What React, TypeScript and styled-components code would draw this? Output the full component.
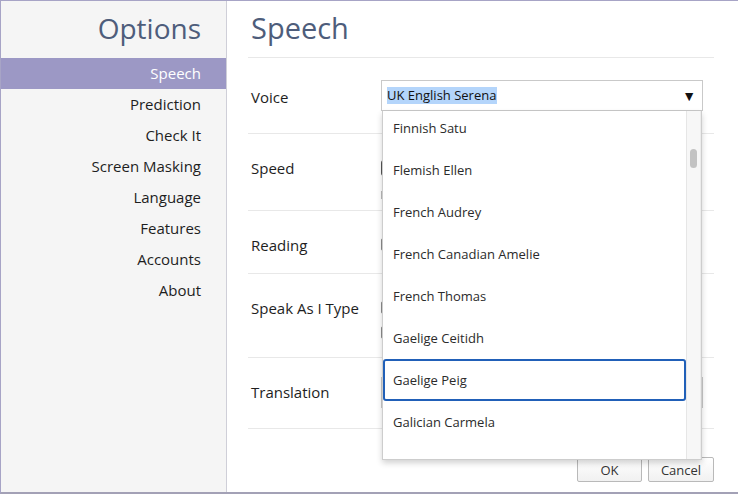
import React from 'react'
import styled, { createGlobalStyle } from 'styled-components'

const GlobalStyle = createGlobalStyle`
  html, body {
    margin: 0;
    padding: 0;
    background: #ffffff;
  }
  body {
    font-family: 'Open Sans', 'Liberation Sans', sans-serif;
    color: #222;
  }
  * {
    box-sizing: border-box;
  }
`

const sections = [
  'Speech',
  'Prediction',
  'Check It',
  'Screen Masking',
  'Language',
  'Features',
  'Accounts',
  'About',
]

const voices = [
  'Finnish Satu',
  'Flemish Ellen',
  'French Audrey',
  'French Canadian Amelie',
  'French Thomas',
  'Gaelige Ceitidh',
  'Gaelige Peig',
  'Galician Carmela',
  'German Anna',
]

const App = () => {
  return (
    <>
      <GlobalStyle />
      <Window>
        <Sidebar>
          <SideTitle>Options</SideTitle>
          <Nav>
            {sections.map((s) => (
              <NavItem key={s} $active={s === 'Speech'}>
                {s}
              </NavItem>
            ))}
          </Nav>
        </Sidebar>

        <Main>
          <Heading>Speech</Heading>

          <Row $h={76} $pt={22}>
            <Label $top={7}>Voice</Label>
            <SelectWrap>
              <Select>
                <Selected>UK English Serena</Selected>
                <Arrow>▼</Arrow>
              </Select>
              <List>
                <ListItems>
                  {voices.map((v) => (
                    <Option key={v} $focused={v === 'Gaelige Peig'}>
                      {v}
                    </Option>
                  ))}
                </ListItems>
                <ScrollTrack>
                  <ScrollThumb />
                </ScrollTrack>
              </List>
            </SelectWrap>
          </Row>

          <Row $h={77} $pt={24}>
            <Label>Speed</Label>
            <Controls>
              <Slider>
                <SliderThumb />
              </Slider>
              <SliderScale />
            </Controls>
          </Row>

          <Row $h={63} $pt={24}>
            <Label>Reading</Label>
            <Controls>
              <Box />
            </Controls>
          </Row>

          <Row $h={84} $pt={24}>
            <Label>Speak As I Type</Label>
            <Controls>
              <Box />
              <Box />
            </Controls>
          </Row>

          <Row $h={71} $pt={19}>
            <Label $top={5}>Translation</Label>
            <PlainSelect />
          </Row>

          <Footer>
            <Button $w={65}>OK</Button>
            <Button $w={66}>Cancel</Button>
          </Footer>
        </Main>
      </Window>
    </>
  )
}

export default App

const Window = styled.div`
  display: flex;
  width: 738px;
  height: 494px;
  border-top: 1px solid #a7a4c6;
  border-left: 1px solid #a7a4c6;
  border-bottom: 2px solid #a3a1b6;
  overflow: hidden;
`

const Sidebar = styled.aside`
  width: 226px;
  flex-shrink: 0;
  background: #f5f5f5;
  border-right: 1px solid #cfcfd8;
  display: flex;
  flex-direction: column;
`

const SideTitle = styled.h1`
  margin: 0;
  height: 57px;
  padding: 9px 25px 0 0;
  text-align: right;
  font-size: 28px;
  line-height: 36px;
  font-weight: 400;
  color: #4e5d7b;
`

const Nav = styled.nav`
  display: flex;
  flex-direction: column;
`

const NavItem = styled.div<{ $active?: boolean }>`
  height: 31px;
  line-height: 31px;
  padding-right: 25px;
  text-align: right;
  font-size: 15px;
  color: ${({ $active }) => ($active ? '#ffffff' : '#1e1e1e')};
  background: ${({ $active }) => ($active ? '#9c98c5' : 'transparent')};
`

const Main = styled.main`
  flex: 1;
  display: flex;
  flex-direction: column;
  padding: 0 24px 0 21px;
  background: #ffffff;
`

const Heading = styled.h2`
  margin: 0;
  height: 57px;
  padding: 9px 0 0 3px;
  font-size: 29px;
  line-height: 36px;
  font-weight: 400;
  color: #4e5d7b;
  border-bottom: 1px solid #e8e8e8;
`

const Row = styled.div<{ $h: number; $pt: number }>`
  display: grid;
  grid-template-columns: 130px 1fr;
  align-items: start;
  align-content: start;
  height: ${({ $h }) => $h}px;
  padding: ${({ $pt }) => $pt}px 0 0 3px;
  border-bottom: 1px solid #e8e8e8;
`

const Label = styled.div<{ $top?: number }>`
  font-size: 15px;
  line-height: 20px;
  color: #1e1e1e;
  margin-top: ${({ $top }) => $top ?? 0}px;
`

const SelectWrap = styled.div`
  position: relative;
  width: 322px;
  z-index: 5;
`

const Select = styled.div`
  display: flex;
  align-items: center;
  justify-content: space-between;
  height: 31px;
  padding: 0 6px 0 5px;
  border: 1px solid #c9c9c9;
  background: #ffffff;
  font-size: 13px;
  color: #111;
`

const Selected = styled.span`
  background: #b4d5fb;
  line-height: 17px;
  padding-right: 1px;
`

const Arrow = styled.span`
  font-size: 14px;
  line-height: 1;
  color: #111;
`

const List = styled.div`
  position: absolute;
  top: 31px;
  left: 1px;
  width: 320px;
  height: 349px;
  display: flex;
  background: #ffffff;
  border: 1px solid #cdcdcd;
  border-top: none;
  box-shadow: 0 3px 6px rgba(0, 0, 0, 0.18);
  overflow: hidden;
`

const ListItems = styled.div`
  flex: 1;
  display: flex;
  flex-direction: column;
  margin-top: -4px;
`

const Option = styled.div<{ $focused?: boolean }>`
  flex-shrink: 0;
  height: 42px;
  display: flex;
  align-items: center;
  padding-left: ${({ $focused }) => ($focused ? 8 : 10)}px;
  font-size: 13px;
  color: #2b2b2b;
  border: ${({ $focused }) => ($focused ? '2px solid #2160b8' : 'none')};
  border-radius: 3px;
`

const ScrollTrack = styled.div`
  width: 15px;
  flex-shrink: 0;
  background: #f7f7f7;
  border-left: 1px solid #e6e6e6;
  border-right: 1px solid #ececec;
  padding: 38px 0 0 3px;
`

const ScrollThumb = styled.div`
  width: 7px;
  height: 19px;
  border-radius: 4px;
  background: #c3c3c3;
`

const Controls = styled.div`
  display: flex;
  flex-direction: column;
  gap: 9px;
`

const Slider = styled.div`
  position: relative;
  height: 4px;
  margin-top: 8px;
  width: 300px;
  background: #d6d6d6;
  border-radius: 2px;
`

const SliderThumb = styled.span`
  position: absolute;
  left: 0;
  top: -6px;
  width: 12px;
  height: 16px;
  border-radius: 3px;
  background: #555;
`

const SliderScale = styled.div`
  margin-top: 12px;
  width: 300px;
  height: 8px;
  border-left: 1px solid #bbb;
`

const Box = styled.span`
  display: block;
  width: 13px;
  height: 13px;
  margin-top: 3px;
  border: 1px solid #8d8d8d;
  border-radius: 2px;
  background: #fff;
`

const PlainSelect = styled.div`
  width: 322px;
  height: 31px;
  border: 1px solid #c9c9c9;
`

const Footer = styled.div`
  display: flex;
  justify-content: flex-end;
  gap: 6px;
  margin-top: 28px;
`

const Button = styled.button<{ $w: number }>`
  width: ${({ $w }) => $w}px;
  height: 25px;
  padding: 0;
  font-family: 'Open Sans', 'Liberation Sans', sans-serif;
  font-size: 13px;
  color: #333;
  background: linear-gradient(#ffffff, #f1f1f1);
  border: 1px solid #b9b9b9;
  border-radius: 2px;
`
